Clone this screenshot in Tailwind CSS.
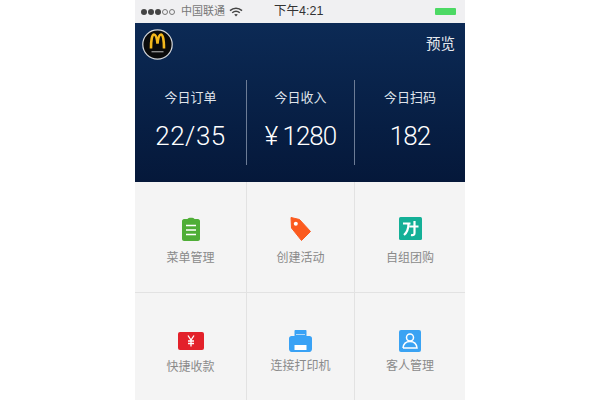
<!DOCTYPE html>
<html lang="zh-CN">
<head>
  <meta charset="UTF-8" />
  <meta name="viewport" content="width=device-width, initial-scale=1.0">
  <title>Store dashboard</title>
  <script src="https://cdn.jsdelivr.net/npm/@tailwindcss/browser@4"></script>
</head>
<body class="bg-white overflow-hidden font-['Liberation_Sans','Noto_Sans_CJK_SC',sans-serif]">
  <div class="w-[330px] h-[400px] mx-auto overflow-hidden flex flex-col">
    <!-- status bar -->
    <div class="h-[23px] shrink-0 bg-[#f0f0f2] relative flex items-center pl-[6px] pr-[9px] text-[#555]">
      <div class="flex items-center gap-[1px]">
        <span class="size-[6px] rounded-full bg-[#444]"></span>
        <span class="size-[6px] rounded-full bg-[#444]"></span>
        <span class="size-[6px] rounded-full bg-[#444]"></span>
        <span class="size-[6px] rounded-full border border-[#777]"></span>
        <span class="size-[6px] rounded-full border border-[#777]"></span>
      </div>
      <span class="ml-[6px] text-[11px] text-[#777]">中国联通</span>
      <svg class="ml-[4px]" width="14" height="10" viewBox="0 0 14 10" fill="none" stroke="#444" stroke-width="1.5">
        <path d="M1 3.600C4.500 .4 9.500 .4 13 3.600" />
        <path d="M3.200 5.800C5.400 3.900 8.600 3.900 10.800 5.800" />
        <path d="M7 9.600L5.200 7.600C6.200 6.800 7.800 6.800 8.800 7.600Z" fill="#444" stroke="none" />
      </svg>
      <span class="ml-[31px] text-[12.5px] text-[#333]">下午4:21</span>
      <span class="ml-auto w-[21px] h-[7px] bg-[#4cd964] rounded-[1px]"></span>
    </div>

    <!-- header -->
    <div class="h-[159px] shrink-0 bg-gradient-to-b from-[#0c2a55] to-[#05183a] flex flex-col">
      <div class="h-[57px] shrink-0 flex items-start justify-between pl-[7px] pr-[10px] pt-[6px]">
        <svg width="31" height="31" viewBox="0 0 31 31">
          <circle cx="15.500" cy="15.500" r="14.700" fill="#0b0b0b" stroke="#d5d8dc" stroke-width="1.200" />
          <path d="M9 19.500C9 11 10 5.500 12 5.500C14 5.500 15 10 15.500 14.500C16 10 17 5.500 19 5.500C21 5.500 22 11 22 19.500" fill="none" stroke="#f4b81c" stroke-width="2.600" />
          <rect x="9.500" y="22" width="12" height="1.400" fill="#8a8a8a" />
        </svg>
        <span class="text-[14.5px] leading-[20px] mt-[5px] text-[#e6e9ee]">预览</span>
      </div>
      <div class="flex h-[85px]">
        <div class="w-[111px] flex flex-col items-center">
          <span class="mt-[10px] text-[13px] leading-[16px] text-[#dfe3ea]">今日订单</span>
          <span class="mt-[13px] text-[26px] leading-[34px] font-light tracking-[0.5px] text-white font-['Roboto',sans-serif]">22/35</span>
        </div>
        <div class="w-[108px] flex flex-col items-center border-l border-[#6c7c96]">
          <span class="mt-[10px] text-[13px] leading-[16px] text-[#dfe3ea]">今日收入</span>
          <span class="mt-[13px] text-[26px] leading-[34px] font-light tracking-[-1px] text-white font-['Roboto',sans-serif]">¥ 1280</span>
        </div>
        <div class="flex-1 flex flex-col items-center border-l border-[#6c7c96]">
          <span class="mt-[10px] text-[13px] leading-[16px] text-[#dfe3ea]">今日扫码</span>
          <span class="mt-[13px] text-[26px] leading-[34px] font-light tracking-[-1px] text-white font-['Roboto',sans-serif]">182</span>
        </div>
      </div>
    </div>

    <!-- menu grid -->
    <div class="flex-1 grid grid-cols-[112px_108px_110px] grid-rows-[111px_1fr] bg-[#f4f4f4] text-[12px] text-[#8a8a8a]">
      <div class="flex flex-col items-center pt-[35px] border-r border-b border-[#e2e2e2]">
        <svg width="18" height="24" viewBox="0 0 18 24">
          <path d="M2 2H5.500C6 .4 12 .4 12.500 2H16C17 2 18 3 18 4V22C18 23 17 24 16 24H2C1 24 0 23 0 22V4C0 3 1 2 2 2Z" fill="#4fae37" />
          <path d="M4 8.500H14M4 13H14M4 17.500H14" stroke="#fff" stroke-width="1.500" />
        </svg>
        <span class="mt-[9px] leading-[16px]">菜单管理</span>
      </div>
      <div class="flex flex-col items-center pt-[35px] border-r border-b border-[#e2e2e2]">
        <svg width="21" height="24" viewBox="0 0 21 24">
          <path d="M1 0.500L9.500 2.500L20.500 14.500L11.500 23.500L1.500 11Z" fill="#fb5a1e" stroke="#fb5a1e" stroke-linejoin="round" />
          <circle cx="5.800" cy="6.800" r="2" fill="#fff" />
        </svg>
        <span class="mt-[9px] leading-[16px]">创建活动</span>
      </div>
      <div class="flex flex-col items-center pt-[35px] border-b border-[#e2e2e2]">
        <svg width="23" height="23" viewBox="0 0 23 23">
          <rect width="23" height="23" rx="1.500" fill="#14b097" />
          <path d="M4 6.500H11.500L9.500 6.500C9.500 12 8 15.500 5 18M10.500 9.500H19.500M15.500 4V16C15.500 17.800 14.500 18.500 12 18" fill="none" stroke="#fff" stroke-width="2.200" />
        </svg>
        <span class="mt-[10px] leading-[16px]">自组团购</span>
      </div>
      <div class="flex flex-col items-center pt-[39px] border-r border-[#e2e2e2]">
        <svg width="26" height="18" viewBox="0 0 26 18">
          <rect width="26" height="18" rx="2" fill="#e3212a" />
          <path d="M10 3.500L13 8L16 3.500M13 8V14.500M10 9H16M10 11.500H16" fill="none" stroke="#fff" stroke-width="1.300" />
        </svg>
        <span class="mt-[9px] leading-[16px]">快捷收款</span>
      </div>
      <div class="flex flex-col items-center pt-[37px] border-r border-[#e2e2e2]">
        <svg width="23" height="22" viewBox="0 0 23 22">
          <path d="M5.500 1C5.500 .4 6 0 6.500 0H16.500C17 0 17.500 .4 17.500 1V6H5.500Z" fill="#39a2f5" />
          <path d="M2.500 6H20.500C22 6 23 7 23 8.500V19C23 20.500 22 22 20.500 22H2.500C1 22 0 20.500 0 19V8.500C0 7 1 6 2.500 6Z" fill="#39a2f5" />
          <rect x="5.500" y="15" width="12" height="5" fill="#fff" />
          <rect x="7" y="4" width="9" height="0.800" fill="#cfe7fb" />
        </svg>
        <span class="mt-[6px] leading-[16px]">连接打印机</span>
      </div>
      <div class="flex flex-col items-center pt-[37px]">
        <svg width="22" height="22" viewBox="0 0 22 22">
          <rect width="22" height="22" rx="2" fill="#3aa3f3" />
          <circle cx="11" cy="7.500" r="3.500" fill="none" stroke="#fff" stroke-width="1.500" />
          <path d="M4 18C4.500 13.500 7.500 11.500 11 11.500C14.500 11.500 17.500 13.500 18 18H4" fill="none" stroke="#fff" stroke-width="1.500" />
        </svg>
        <span class="mt-[6px] leading-[16px]">客人管理</span>
      </div>
    </div>
  </div>
</body>
</html>
